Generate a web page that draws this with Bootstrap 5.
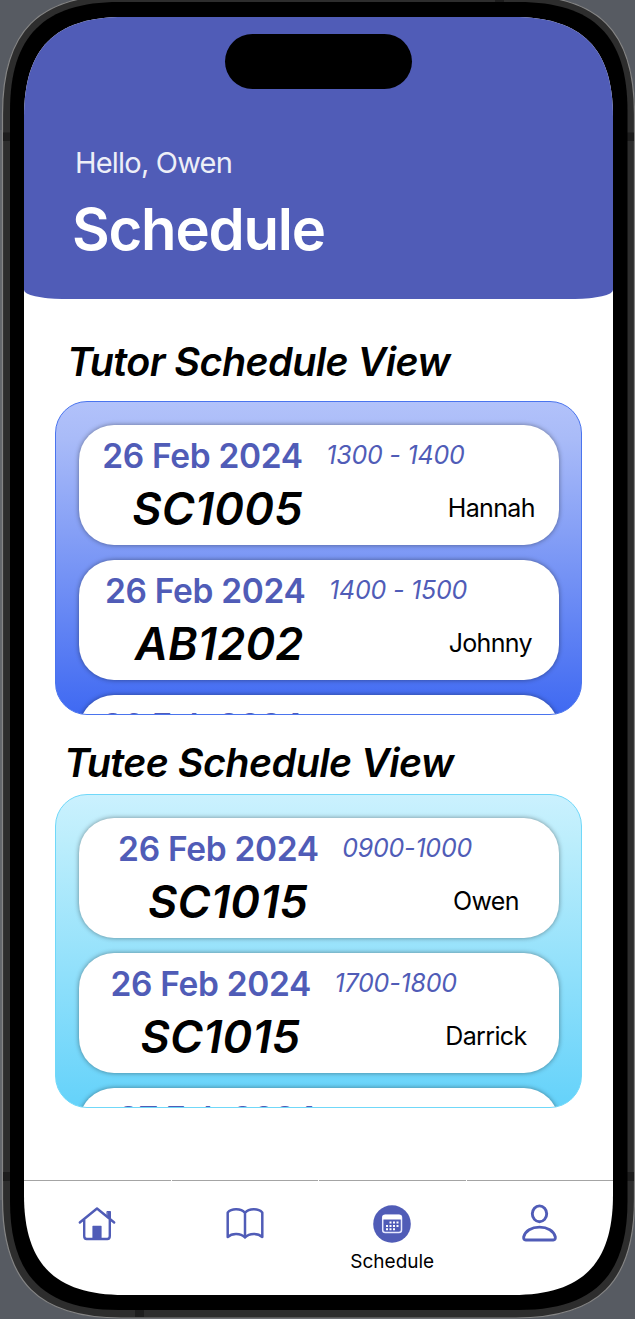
<!DOCTYPE html>
<html lang="en">
<head>
<meta charset="utf-8">
<meta name="viewport" content="width=device-width, initial-scale=1">
<title>Schedule</title>
<link href="https://cdn.jsdelivr.net/npm/bootstrap@5.3.0/dist/css/bootstrap.min.css" rel="stylesheet">
<style>
  :root { --indigo: #505cb7; }
  body { margin: 0; background: #575b62; font-family: "Inter", "Liberation Sans", sans-serif; color: #000; overflow: hidden; }
  .device { width: 635px; height: 1319px; padding: 17px 22px 24px 24px; }
  .bezel { position: absolute; inset: 0; }
  .screen {
    width: 589px; height: 1278px; background: #fff;
    clip-path: path("M0 100C0 31 31 0 100 0H489C558 0 589 31 589 100V1178C589 1247 558 1278 489 1278H100C31 1278 0 1247 0 1178Z");
  }
  .hero { height: 282px; background: var(--indigo); color: #fff; border-radius: 0 0 38px 38px / 0 0 9px 9px; padding: 128px 0 0 48px; }
  .island { position: absolute; left: 225px; top: 34px; width: 187px; height: 55px; background: #000; }
  .hello { font-size: 29px; line-height: 36px; font-weight: 400; letter-spacing: -.8px; opacity: .9; padding-left: 3px; }
  .title { font-size: 58px; line-height: 70px; font-weight: 600; letter-spacing: -1.2px; margin: 13px 0 0; }
  .section-title { font-size: 39.5px; line-height: 48px; font-weight: 600; font-style: italic; letter-spacing: -.56px; margin: 0; white-space: nowrap; }
  .st-tutor { padding: 39px 0 0 43px; height: 102px; }
  .st-tutee { padding: 24px 0 0 40px; height: 79px; }
  .panel { height: 314px; margin: 0 31px; padding: 22.5px 22.5px 0; border-radius: 32px; border: 1px solid; overflow: hidden; gap: 15px; background-origin: border-box; }
  .panel-tutor { border-color: #4a74ee; background-image: linear-gradient(#b2c2fa, #a9bbf8 12%, #3f69f2); }
  .panel-tutee { border-color: #70d8f9; background-image: linear-gradient(#cbf1fe, #bdeefc 14%, #64d2fa); }
  .lesson { height: 120px; background: #fff; border-radius: 35px; box-shadow: 0 0 5px rgba(0,0,0,.42); padding-top: 4.4px; white-space: nowrap; }
  .line { height: 54px; }
  .line + .line { height: 51px; }
  .date { font-size: 33.5px; font-weight: 600; letter-spacing: -.32px; color: var(--indigo); margin-right: 23.5px; }
  .time { font-size: 25px; font-style: italic; letter-spacing: -.22px; color: var(--indigo); }
  .code { font-size: 45px; font-weight: 600; font-style: italic; letter-spacing: .25px; margin: 0 145px 0 30px; }
  .who { font-size: 25px; letter-spacing: -.65px; }
  .tabs { height: 115px; }
  .tab-cell { flex: 1 1 0; border-top: 1px solid #a4a4a4; padding-top: 23px; }
  .tab-cell + .tab-cell { margin-left: 1px; }
  .tab-label { font-size: 19px; line-height: 24px; margin-top: 6px; }
</style>
</head>
<body>
<div class="device position-relative">
  <svg class="bezel" width="635" height="1319" viewBox="0 0 635 1319">
    <path fill="#63666b" d="M0 130H3V1200H0Z"/>
    <path fill="#2d2d2d" stroke="#858585" stroke-width="1.2" d="M2.500 114C2.500 31 38.500 -5 121.500 -5H515.500C598.500 -5 634.500 31 634.500 114V1199C634.500 1282 598.500 1318 515.500 1318H121.500C38.500 1318 2.500 1282 2.500 1199Z"/>
    <path fill="#1d1d1d" d="M3 132.500H10V141H3ZM627 132.500H634V141H627ZM3 1172H10V1181H3ZM627 1172H634V1181H627ZM495 0H504V3H495ZM135 1309H144V1317H135Z"/>
    <path fill="#000" d="M10 111C10 36 44 2 119 2H518.500C593.500 2 627.500 36 627.500 111V1201C627.500 1276 593.500 1310 518.500 1310H119C44 1310 10 1276 10 1201Z"/>
  </svg>

  <main class="screen position-relative d-flex flex-column">
    <header class="hero flex-shrink-0">
      <div class="hello">Hello, Owen</div>
      <h1 class="title">Schedule</h1>
    </header>

    <h2 class="section-title st-tutor flex-shrink-0">Tutor Schedule View</h2>
    <section class="panel panel-tutor d-flex flex-column flex-shrink-0">
      <article class="lesson flex-shrink-0 d-flex justify-content-center">
        <div>
          <div class="line d-flex align-items-center"><span class="date">26 Feb 2024</span><span class="time">1300 - 1400</span></div>
          <div class="line d-flex align-items-center"><span class="code">SC1005</span><span class="who">Hannah</span></div>
        </div>
      </article>
      <article class="lesson flex-shrink-0 d-flex justify-content-center">
        <div>
          <div class="line d-flex align-items-center"><span class="date">26 Feb 2024</span><span class="time">1400 - 1500</span></div>
          <div class="line d-flex align-items-center"><span class="code">AB1202</span><span class="who">Johnny</span></div>
        </div>
      </article>
      <article class="lesson flex-shrink-0 d-flex justify-content-center">
        <div>
          <div class="line d-flex align-items-center"><span class="date">26 Feb 2024</span></div>
          <div class="line d-flex align-items-center"><span class="code">SC1005</span><span class="who">Hannah</span></div>
        </div>
      </article>
    </section>

    <h2 class="section-title st-tutee flex-shrink-0">Tutee Schedule View</h2>
    <section class="panel panel-tutee d-flex flex-column flex-shrink-0">
      <article class="lesson flex-shrink-0 d-flex justify-content-center">
        <div>
          <div class="line d-flex align-items-center"><span class="date">26 Feb 2024</span><span class="time">0900-1000</span></div>
          <div class="line d-flex align-items-center"><span class="code">SC1015</span><span class="who">Owen</span></div>
        </div>
      </article>
      <article class="lesson flex-shrink-0 d-flex justify-content-center">
        <div>
          <div class="line d-flex align-items-center"><span class="date">26 Feb 2024</span><span class="time">1700-1800</span></div>
          <div class="line d-flex align-items-center"><span class="code">SC1015</span><span class="who">Darrick</span></div>
        </div>
      </article>
      <article class="lesson flex-shrink-0 d-flex justify-content-center">
        <div>
          <div class="line d-flex align-items-center"><span class="date">27 Feb 2024</span></div>
          <div class="line d-flex align-items-center"><span class="code">SC1015</span><span class="who">Owen</span></div>
        </div>
      </article>
    </section>

    <nav class="tabs d-flex mt-auto flex-shrink-0">
      <div class="tab-cell d-flex flex-column align-items-center">
        <svg width="40" height="40" viewBox="0 0 40 40" fill="none" stroke="#505cb7" stroke-width="2.400" stroke-linecap="round" stroke-linejoin="round">
          <path d="M2.800 18.500L20 4.500L37.200 18.500M7.200 16V32Q7.200 35 9.700 35H30.300Q32.800 35 32.800 32V16"/>
          <path d="M30.300 7.500H33.500V15L30.300 12.500Z" fill="#505cb7" stroke-width="1"/>
          <path d="M16 22.300H24V34H16Z" fill="#505cb7" stroke-width="1.200"/>
        </svg>
      </div>
      <div class="tab-cell d-flex flex-column align-items-center">
        <svg width="40" height="40" viewBox="0 0 40 40" fill="none" stroke="#505cb7" stroke-width="2.500" stroke-linecap="round" stroke-linejoin="round">
          <path d="M20 9C16 4.200 6.500 4.200 2.700 8.500V33C7 28.800 15.500 28.800 20 33.500C24.500 28.800 33 28.800 37.300 33V8.500C33.500 4.200 24 4.200 20 9ZM20 9V33.500"/>
        </svg>
      </div>
      <div class="tab-cell d-flex flex-column align-items-center">
        <svg width="40" height="40" viewBox="0 0 40 40">
          <circle cx="20" cy="20" r="18.800" fill="#505cb7"/>
          <rect x="10.700" y="11.200" width="18.800" height="17.300" rx="2.500" fill="none" stroke="#e8eaff" stroke-width="1.500"/>
          <path fill="#fff" d="M10.500 13Q10.500 10.700 13 10.700H27.200Q29.700 10.700 29.700 13V15.500H10.500Z"/>
          <path stroke="#fff" stroke-width="2" stroke-dasharray="2 1.500" d="M17.500 18.500H27M14 21.900H27M14 25.300H24"/>
        </svg>
        <span class="tab-label">Schedule</span>
      </div>
      <div class="tab-cell d-flex flex-column align-items-center">
        <svg width="40" height="40" viewBox="0 0 40 40" fill="none" stroke="#505cb7" stroke-width="2.900" stroke-linejoin="round">
          <ellipse cx="19.500" cy="9.800" rx="7.200" ry="7.900"/>
          <path d="M5.700 36H33.300Q35.600 36 35.300 32.800C33.700 26.800 27.500 23.100 19.500 23.100S5.300 26.800 3.700 32.800Q3.400 36 5.700 36Z"/>
        </svg>
      </div>
    </nav>
  </main>
  <div class="island rounded-pill"></div>
</div>
<script src="https://cdn.jsdelivr.net/npm/bootstrap@5.3.0/dist/js/bootstrap.bundle.min.js"></script>
</body>
</html>
